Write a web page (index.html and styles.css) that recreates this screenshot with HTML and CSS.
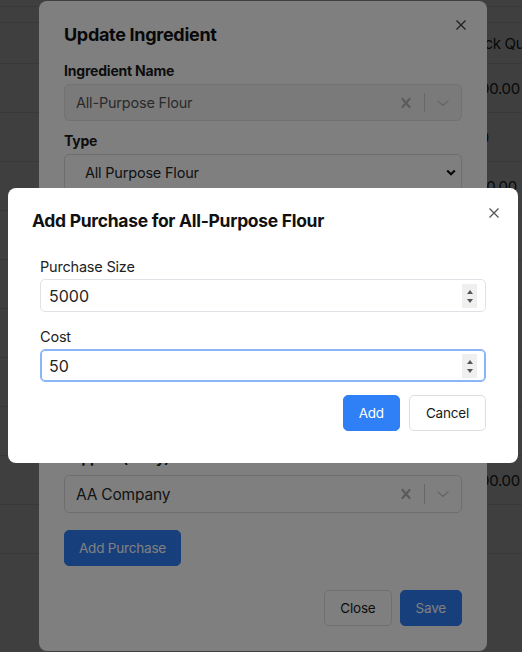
FILE: index.html
```html
<!DOCTYPE html>
<html lang="en">
<head>
<meta charset="utf-8">
<title>Update Ingredient</title>
<link rel="stylesheet" href="styles.css">
</head>
<body>
<div class="page">
  <div class="topline"></div>
  <div class="table">
    <div class="row head"><div></div><div class="cell">Stock Quantity</div></div>
    <div class="row"><div></div><div class="cell">5000.00</div></div>
    <div class="row"><div></div><div class="cell">250</div></div>
    <div class="row"><div></div><div class="cell">1000.00</div></div>
    <div class="row"><div></div><div class="cell">80</div></div>
    <div class="row"><div></div><div class="cell">12</div></div>
    <div class="row"><div></div><div class="cell">60</div></div>
    <div class="row"><div></div><div class="cell">45</div></div>
    <div class="row"><div></div><div class="cell">30</div></div>
    <div class="row"><div></div><div class="cell">2000.00</div></div>
    <div class="row"><div></div><div class="cell">0</div></div>
  </div>
</div>

<div class="backdrop"></div>

<div class="modal modal-main">
  <button class="close" aria-label="Close"><svg width="10" height="10" viewBox="0 0 10 10"><path d="M0.5 0.5L9.5 9.5M9.5 0.5L0.5 9.5" stroke="currentColor" stroke-width="1.4" fill="none"/></svg></button>
  <h2 class="title">Update Ingredient</h2>
  <div class="form">
    <div class="field">
      <label class="flabel">Ingredient Name</label>
      <div class="rselect disabled">
        <span class="rs-value">All-Purpose Flour</span>
        <span class="rs-ind"><svg width="20" height="20" viewBox="0 0 20 20"><path fill="currentColor" d="M14.348 14.849c-0.469 0.469-1.229 0.469-1.697 0l-2.651-3.030-2.651 3.029c-0.469 0.469-1.229 0.469-1.697 0-0.469-0.469-0.469-1.229 0-1.697l2.758-3.150-2.759-3.152c-0.469-0.469-0.469-1.228 0-1.697s1.228-0.469 1.697 0l2.652 3.031 2.651-3.031c0.469-0.469 1.228-0.469 1.697 0s0.469 1.229 0 1.697l-2.758 3.152 2.758 3.150c0.469 0.469 0.469 1.229 0 1.698z"/></svg></span>
        <span class="rs-sep"></span>
        <span class="rs-ind chev"><svg width="20" height="20" viewBox="0 0 20 20"><path d="M5 8l5 4.5L15 8" stroke="currentColor" stroke-width="1.6" fill="none" stroke-linecap="round" stroke-linejoin="round"/></svg></span>
      </div>
    </div>
    <div class="field">
      <label class="flabel">Type</label>
      <div class="nselect">
        <span>All Purpose Flour</span>
        <svg width="10" height="7" viewBox="0 0 10 7"><path d="M1.2 1.5L5 5.2L8.8 1.5" stroke="#111" stroke-width="2.2" fill="none"/></svg>
      </div>
    </div>
    <div class="field">
      <label class="flabel">Unit</label>
      <div class="nselect"><span>Grams</span></div>
    </div>
    <div class="field">
      <label class="flabel">Stock Quantity</label>
      <div class="nselect"><span>5000</span></div>
    </div>
    <div class="field">
      <label class="flabel">Cost per Unit</label>
      <div class="nselect"><span>0.01</span></div>
    </div>
    <div class="check-row"><span class="box"></span><span>Track stock</span></div>
    <div class="field">
      <label class="flabel supp">Supplier (if any)</label>
      <div class="rselect tall">
        <span class="rs-value dark">AA Company</span>
        <span class="rs-ind"><svg width="20" height="20" viewBox="0 0 20 20"><path fill="currentColor" d="M14.348 14.849c-0.469 0.469-1.229 0.469-1.697 0l-2.651-3.030-2.651 3.029c-0.469 0.469-1.229 0.469-1.697 0-0.469-0.469-0.469-1.229 0-1.697l2.758-3.150-2.759-3.152c-0.469-0.469-0.469-1.228 0-1.697s1.228-0.469 1.697 0l2.652 3.031 2.651-3.031c0.469-0.469 1.228-0.469 1.697 0s0.469 1.229 0 1.697l-2.758 3.152 2.758 3.150c0.469 0.469 0.469 1.229 0 1.698z"/></svg></span>
        <span class="rs-sep"></span>
        <span class="rs-ind chev"><svg width="20" height="20" viewBox="0 0 20 20"><path d="M5 8l5 4.5L15 8" stroke="currentColor" stroke-width="1.6" fill="none" stroke-linecap="round" stroke-linejoin="round"/></svg></span>
      </div>
    </div>
    <button class="btn btn-primary add-purchase">Add Purchase</button>
  </div>
  <div class="footer">
    <button class="btn btn-light">Close</button>
    <button class="btn btn-primary">Save</button>
  </div>
</div>

<div class="backdrop"></div>

<div class="modal modal-sub">
  <button class="close sub" aria-label="Close"><svg width="10" height="10" viewBox="0 0 10 10"><path d="M0.5 0.5L9.5 9.5M9.5 0.5L0.5 9.5" stroke="currentColor" stroke-width="1.3" fill="none"/></svg></button>
  <h2 class="title sub-title">Add Purchase for All-Purpose Flour</h2>
  <div class="sub-body">
    <div class="sfield">
      <label class="slabel">Purchase Size</label>
      <div class="ninput"><span>5000</span><span class="spin"><i class="up"></i><i class="down"></i></span></div>
    </div>
    <div class="sfield">
      <label class="slabel">Cost</label>
      <div class="ninput focus"><span>50</span><span class="spin"><i class="up"></i><i class="down"></i></span></div>
    </div>
    <div class="actions">
      <button class="btn btn-primary">Add</button>
      <button class="btn btn-light">Cancel</button>
    </div>
  </div>
</div>
</body>
</html>
```
FILE: styles.css
```css
* { box-sizing: border-box; margin: 0; padding: 0; }
html, body { width: 522px; height: 652px; overflow: hidden; }
body {
  font-family: Inter, "Noto Sans", sans-serif;
  background: #fff;
  color: #212529;
  position: relative;
}

/* background page */
.topline { height: 7px; border-bottom: 1px solid #dee2e6; }
.table { margin-top: 15px; border-top: 1px solid #dee2e6; }
.row {
  display: grid;
  grid-template-columns: 454px 1fr;
  align-items: center;
  height: 49px;
  border-bottom: 1px solid #dee2e6;
}
.row.head { height: 41px; }
.cell { padding-left: 8px; font-size: 15px; letter-spacing: -0.3px; white-space: nowrap; color: #212529; }

.backdrop { position: fixed; inset: 0; background: rgba(0, 0, 0, 0.5); }

.modal { position: absolute; background: #fff; border-radius: 8px; }

.close {
  position: absolute;
  border: 0;
  background: none;
  width: 10px;
  height: 10px;
  display: flex;
  color: #444;
}

/* main modal */
.modal-main {
  left: 39px;
  top: 1px;
  width: 448px;
  height: 650px;
  padding: 22px 25px 25px;
  display: flex;
  flex-direction: column;
}
.modal-main .close { right: 21px; top: 19px; }
.title {
  font-size: 18px;
  line-height: 24px;
  font-weight: 700;
  letter-spacing: -0.3px;
  color: #111;
}
.form { margin-top: 14px; display: flex; flex-direction: column; gap: 10px; }
.field { display: flex; flex-direction: column; }
.flabel {
  font-size: 14px;
  line-height: 20px;
  font-weight: 700;
  letter-spacing: -0.2px;
  margin-bottom: 3px;
  color: #1a1a1a;
}
.flabel.supp { margin-bottom: 7px; }

.rselect {
  height: 37px;
  border: 1px solid #dcdcdc;
  border-radius: 5px;
  background: #fff;
  display: flex;
  align-items: center;
  padding-left: 11px;
}
.rselect.disabled { background: #f5f5f5; border-color: #e4e4e4; }
.rselect.tall { height: 38px; }
.rs-value { flex: 1; font-size: 14.5px; letter-spacing: -0.2px; color: #555; }
.rs-value.dark { color: #2a2a2a; font-size: 15.5px; }
.rs-ind { width: 36px; height: 36px; display: flex; align-items: center; justify-content: center; color: #b8b8b8; }
.rs-ind.chev { color: #cfcfcf; }
.rs-sep { width: 1px; align-self: stretch; margin: 8px 0; background: #cfcfcf; }

.nselect {
  height: 37px;
  border: 1px solid #dcdcdc;
  border-radius: 5px;
  background: #fff;
  display: flex;
  align-items: center;
  justify-content: space-between;
  padding: 0 5px 0 20px;
  font-size: 14.5px;
  letter-spacing: -0.2px;
}
.check-row { height: 27px; display: flex; align-items: center; gap: 8px; font-size: 14px; }
.check-row .box { width: 16px; height: 16px; border: 1px solid #ccc; border-radius: 3px; }

.btn {
  height: 36px;
  padding: 0 14px;
  border-radius: 5px;
  font-family: inherit;
  font-size: 13.5px;
  letter-spacing: -0.2px;
  border: 1px solid transparent;
  display: inline-flex;
  align-items: center;
  justify-content: center;
}
.btn-primary { background: #2f7ff7; border-color: #2f7ff7; color: #fff; }
.btn-light { background: #fff; border-color: #dedede; color: #1a1a1a; }
.add-purchase { align-self: flex-start; margin-top: 7px; }

.footer { margin-top: auto; display: flex; justify-content: flex-end; gap: 8px; }
.footer .btn { padding: 0 15px; }

/* sub modal */
.modal-sub {
  left: 8px;
  top: 188px;
  width: 510px;
  padding: 22px 24px 32px;
}
.modal-sub .close { right: 19px; top: 20px; color: #555; }
.sub-title { line-height: 22px; font-size: 17.5px; letter-spacing: -0.3px; }
.sub-body { margin-top: 25px; padding: 0 8px; display: flex; flex-direction: column; gap: 15px; }
.sfield { display: flex; flex-direction: column; }
.slabel { font-size: 14.5px; line-height: 20px; letter-spacing: -0.2px; margin-bottom: 2px; color: #222; }
.ninput {
  position: relative;
  height: 33px;
  border: 1px solid #dee2e6;
  border-radius: 5px;
  display: flex;
  align-items: center;
  padding: 0 8px;
  font-size: 16px;
  color: #1f1f1f;
}
.ninput.focus { border-color: #8ab6f9; box-shadow: inset 0 0 0 1px #8ab6f9; }
.spin {
  position: absolute;
  right: 8px;
  top: 4px;
  width: 15px;
  height: 24px;
  background: #efefef;
  display: flex;
  flex-direction: column;
  align-items: center;
  justify-content: center;
  gap: 5px;
}
.spin i { width: 0; height: 0; border-left: 3.5px solid transparent; border-right: 3.5px solid transparent; }
.spin .up { border-bottom: 4px solid #555; }
.spin .down { border-top: 4px solid #555; }
.actions { margin-top: -2px; display: flex; justify-content: flex-end; gap: 9px; }
.actions .btn-primary { padding: 0 15px; }
.actions .btn-light { padding: 0 16px; }
```
